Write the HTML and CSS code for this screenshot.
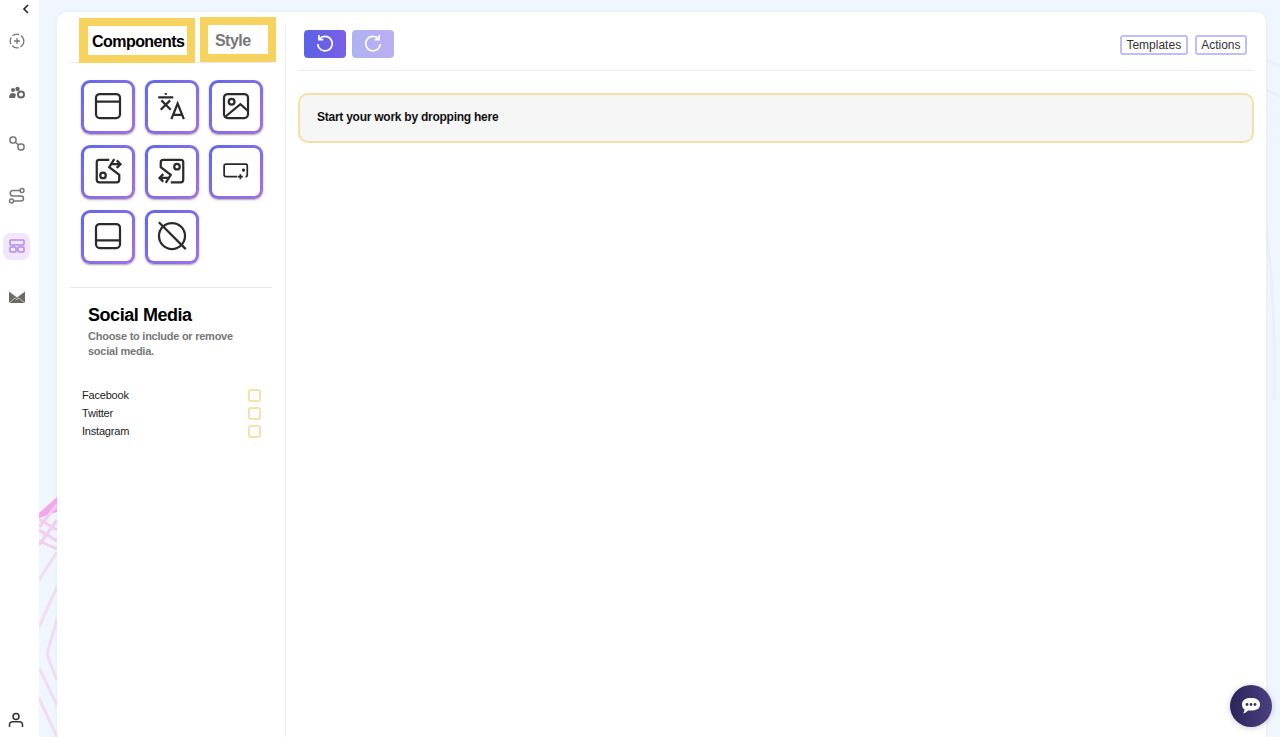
FILE: index.html
```html
<!DOCTYPE html>
<html lang="en">
<head>
    <meta charset="UTF-8">
    <meta name="viewport" content="width=device-width, initial-scale=1.0">
    <title>Template builder</title>
    <link rel="stylesheet" href="styles.css">
</head>
<body>

    <!-- background art behind the card -->
    <svg class="bg-art" width="1280" height="737" viewBox="0 0 1280 737" fill="none">
        <path d="M39 513 L57 497 L57 512 L39 518Z" fill="#f3a8ee"/>
        <g stroke="#f5cdf3" stroke-width="3">
            <path d="M39 527 L57 505"/>
            <path d="M39 545 L57 520"/>
            <path d="M39 519 L57 530"/>
            <path d="M39 530 L57 541"/>
            <path d="M39 541 L57 549"/>
        </g>
        <g stroke="#f2dcf5" stroke-width="3">
            <path d="M39 580 L57 552"/>
            <path d="M39 627 L57 587"/>
            <path d="M57 619 L49 647 Q46 654 49 660 L57 680"/>
            <path d="M39 668 L57 705"/>
            <path d="M39 698 L57 737"/>
        </g>
        <g stroke="#e8f1fb" stroke-width="3">
            <path d="M1266 60 L1280 66"/>
            <path d="M1266 90 L1280 96"/>
            <path d="M1266 230 Q1276 300 1274 400"/>
        </g>
    </svg>

    <aside class="sidebar">
        <button class="collapse">
            <svg width="10" height="10" viewBox="0 0 10 10" fill="none" stroke="#222" stroke-width="1.6"><path d="M7 1 L3 5 L7 9"/></svg>
        </button>
        <nav class="nav">
            <a class="nav-item">
                <svg width="18" height="18" viewBox="0 0 18 18" fill="none" stroke="#777" stroke-width="1.3"><circle cx="9" cy="9" r="6.8" stroke-dasharray="7 2"/><path d="M9 6 V12 M6 9 H12"/></svg>
            </a>
            <a class="nav-item">
                <svg width="18" height="18" viewBox="0 -1 18 18" fill="#666"><circle cx="5" cy="6" r="2"/><circle cx="9.5" cy="5" r="2.2"/><path d="M1 13 Q1.500 9 5 9 L8 10 L7 14 L1.500 14Z"/><circle cx="13" cy="10.500" r="3" fill="none" stroke="#666" stroke-width="2"/></svg>
            </a>
            <a class="nav-item">
                <svg width="18" height="18" viewBox="0 -1 18 18" fill="none" stroke="#777" stroke-width="1.500"><rect x="2" y="2" width="6" height="6" rx="2.500"/><rect x="10" y="9" width="6" height="6" rx="2.500"/><path d="M7 7 L10.500 10"/></svg>
            </a>
            <a class="nav-item">
                <svg width="18" height="18" viewBox="0 -1 18 18" fill="none" stroke="#777" stroke-width="1.500"><circle cx="14" cy="3.500" r="2"/><circle cx="3.500" cy="14" r="2"/><path d="M12 3.500 H5 A2.700 2.700 0 0 0 5 9 H13 A2.500 2.500 0 0 1 13 14 H5.500"/></svg>
            </a>
            <a class="nav-item active">
                <svg width="16" height="14" viewBox="0 0 16 14" fill="none" stroke="#b48de8" stroke-width="1.6"><rect x="1" y="1" width="14" height="5" rx="1"/><rect x="1" y="8" width="6" height="5" rx="1"/><rect x="9" y="8" width="6" height="5" rx="1"/></svg>
            </a>
            <a class="nav-item">
                <svg width="16" height="12" viewBox="0 -1.500 16 12" fill="#6e6963"><path d="M0 -1 L8 5 L16 -1 V10.500 H0Z"/><path d="M0 10.500 L6 5.500 L8 7 L10 5.500 L16 10.500" fill="none" stroke="#fff" stroke-width=".6"/></svg>
            </a>
        </nav>
        <a class="user">
            <svg width="16" height="16" viewBox="0 0 16 16" fill="none" stroke="#333" stroke-width="1.5"><circle cx="8" cy="4.500" r="3"/><path d="M1.500 15 V13 Q1.500 9.800 5 9.800 H11 Q14.500 9.800 14.500 13 V15"/></svg>
        </a>
    </aside>

    <main class="main">
        <div class="card">
            <section class="side">
                <div class="tabs">
                    <div class="tab tab-on">Components</div>
                    <div class="tab tab-off">Style</div>
                </div>

                <div class="blocks">
                    <button class="block">
                        <svg class="ico" viewBox="0 0 24 24"><rect x="2.400" y="2.400" width="19.200" height="19.200" rx="3"/><path d="M2.400 8.500 H21.600"/></svg>
                    </button>
                    <button class="block">
                        <svg class="ico" viewBox="0 0 24 24"><path d="M1 5 H13 M7 1.500 V3 M3.500 7.500 L11 15 M10.500 7.500 L3 15 M11.500 22.500 L16.500 10 L21.500 22.500 M13 19 H20"/></svg>
                    </button>
                    <button class="block">
                        <svg class="ico" viewBox="0 0 24 24"><rect x="2.400" y="2.400" width="19.200" height="19.200" rx="3"/><circle cx="8.500" cy="8.500" r="2.300"/><path d="M3 21 L15.500 10.500 L21.600 16"/></svg>
                    </button>
                    <button class="block">
                        <svg class="ico" viewBox="0 0 24 24"><path d="M13 3 H5 Q3 3 3 5 V19 Q3 21 5 21 H19 Q21 21 21 19 V15 L13 9 L17 2.500"/><circle cx="8" cy="15.500" r="2.200"/><path d="M14 6.500 H22 M19 3.500 L22 6.500 L19 9.500"/></svg>
                    </button>
                    <button class="block">
                        <svg class="ico flip" viewBox="0 0 24 24"><path d="M13 3 H5 Q3 3 3 5 V19 Q3 21 5 21 H19 Q21 21 21 19 V15 L13 9 L17 2.500"/><circle cx="8" cy="15.500" r="2.200"/><path d="M14 6.500 H22 M19 3.500 L22 6.500 L19 9.500"/></svg>
                    </button>
                    <button class="block">
                        <svg class="ico ico-thin" viewBox="0 0 24 24"><path d="M13 16.500 H4 Q2.500 16.500 2.500 15 V8 Q2.500 6.500 4 6.500 H20 Q21 6.500 21 8 V15 Q21 16.500 20 16.500 H19.500 M15.500 14.500 V18.500 M13.500 16.500 H17.500 M18 10 V12.500 M16.800 11.300 H19.200"/></svg>
                    </button>
                    <button class="block">
                        <svg class="ico" viewBox="0 0 24 24"><rect x="2.400" y="2.400" width="19.200" height="19.200" rx="3"/><path d="M2.400 15.500 H21.600"/></svg>
                    </button>
                    <button class="block">
                        <svg class="ico" viewBox="0 0 24 24"><circle cx="12" cy="12" r="10.400"/><path d="M1.500 1 L23 22.500"/></svg>
                    </button>
                </div>

                <div class="social">
                    <h2 class="social-title">Social Media</h2>
                    <p class="social-desc">Choose to include or remove social media.</p>
                    <ul class="social-list">
                        <li class="social-row">Facebook<span class="check"></span></li>
                        <li class="social-row">Twitter<span class="check"></span></li>
                        <li class="social-row">Instagram<span class="check"></span></li>
                    </ul>
                </div>
            </section>

            <div class="vline"></div>

            <section class="work">
                <div class="toolbar">
                    <button class="hist">
                        <svg width="20" height="20" viewBox="0 0 18 18" fill="none" stroke="#fff" stroke-width="1.500"><path d="M4 4.500 A6.500 6.500 0 1 1 2.500 9"/><path d="M3.500 1 V5 H7.500"/></svg>
                    </button>
                    <button class="hist hist-off">
                        <svg width="20" height="20" viewBox="0 0 18 18" fill="none" stroke="#fff" stroke-width="1.500"><path d="M14 4.500 A6.500 6.500 0 1 0 15.500 9"/><path d="M14.500 1 V5 H10.500"/></svg>
                    </button>
                    <div class="toolbar-right">
                        <button class="link-btn">Templates</button>
                        <button class="link-btn">Actions</button>
                    </div>
                </div>
                <div class="dropzone">Start your work by dropping here</div>
            </section>
        </div>
    </main>

    <button class="chat">
        <svg width="20" height="18" viewBox="0 0 20 18"><path d="M10 1 C15 1 19 2.800 19 7.500 C19 12 15 13.500 10 13.500 L7 13.500 C5.500 15 4 16 2 16.500 C3 15 3.500 14 3.500 12.500 C1.800 11.500 1 9.800 1 7.500 C1 2.800 5 1 10 1Z" fill="#fff"/><circle cx="6" cy="7.500" r="1.400" fill="#3a3268"/><circle cx="10" cy="7.500" r="1.400" fill="#3a3268"/><circle cx="14" cy="7.500" r="1.400" fill="#3a3268"/></svg>
    </button>

</body>
</html>
```

FILE: styles.css
```css
* {
    box-sizing: border-box;
}

html, body {
    height: 100%;
}

body {
    margin: 0;
    display: flex;
    overflow: hidden;
    font-family: "Liberation Sans", Arial, sans-serif;
    background-color: #eff6fd;
    color: #111;
}

button {
    font-family: inherit;
    padding: 0;
    cursor: pointer;
}

.bg-art {
    position: absolute;
    top: 0;
    left: 0;
}

/* left rail */
.sidebar {
    position: relative;
    width: 39px;
    flex-shrink: 0;
    display: flex;
    flex-direction: column;
    background-color: #fff;
    padding-top: 4px;
}

.collapse {
    align-self: flex-end;
    width: 10px;
    height: 10px;
    margin-right: 8px;
    border: none;
    background: none;
    display: flex;
}

.nav {
    display: flex;
    flex-direction: column;
    gap: 24.4px;
    margin-top: 13px;
    margin-left: 3px;
}

.nav-item {
    width: 27px;
    height: 27px;
    display: flex;
    align-items: center;
    justify-content: center;
    border-radius: 8px;
}

.nav-item.active {
    background-color: #f1e6fc;
}

.user {
    margin-top: auto;
    margin-left: 8px;
    margin-bottom: 9px;
    height: 16px;
}

/* card */
.main {
    position: relative;
    flex: 1;
    padding: 12px 14px 0 18px;
    display: flex;
}

.card {
    flex: 1;
    display: flex;
    background-color: #fff;
    border-radius: 10px 10px 0 0;
    box-shadow: 0 0 3px rgba(120, 140, 170, 0.15);
}

.side {
    width: 228px;
    flex-shrink: 0;
    padding-top: 5px;
}

.vline {
    width: 1px;
    margin-top: 13px;
    background-color: #eee;
}

/* tabs */
.tabs {
    height: 46px;
    margin: 0 13px;
    padding-left: 9px;
    display: flex;
    align-items: flex-start;
    gap: 5px;
    border-bottom: 1px solid #eaeaea;
}

.tab {
    flex-shrink: 0;
    height: 45px;
    border: 8px solid #f7d25f;
    background-color: #fff;
    font-size: 16px;
    font-weight: bold;
    letter-spacing: -0.55px;
    line-height: 31px;
}

.tab-on {
    width: 116px;
    margin-top: 1px;
    padding-left: 4px;
    color: #000;
    border-width: 8px 8px 8px 9px;
}

.tab-off {
    width: 76px;
    padding-left: 7px;
    color: #777;
}

/* component buttons */
.blocks {
    display: grid;
    grid-template-columns: repeat(3, 54px);
    gap: 11px 10px;
    margin-top: 17px;
    padding-left: 24px;
}

.block {
    height: 54px;
    padding: 0 1px 2px 0;
    display: flex;
    align-items: center;
    justify-content: center;
    border: 3px solid transparent;
    border-radius: 9px;
    background: linear-gradient(#fff, #fff) padding-box,
        linear-gradient(135deg, #6069ea, #a870e2) border-box;
    box-shadow: 0 1px 2px rgba(0, 0, 0, 0.35);
}

.ico {
    width: 30px;
    height: 30px;
    flex-shrink: 0;
    fill: none;
    stroke: #2b2b2b;
    stroke-width: 1.8;
}

.ico-thin {
    stroke-width: 1.4;
}

.flip {
    transform: rotate(180deg);
}

/* social media */
.social {
    margin: 23px 13px 0;
    border-top: 1px solid #eaeaea;
}

.social-title {
    margin: 16px 0 0 18px;
    font-size: 18px;
    line-height: 22px;
    letter-spacing: -0.45px;
    color: #000;
}

.social-desc {
    margin: 3px 20px 0 18px;
    font-size: 11px;
    font-weight: bold;
    letter-spacing: -0.25px;
    line-height: 15px;
    color: #777;
}

.social-list {
    list-style-type: none;
    margin: 27px 0 0;
    padding: 0 11px 0 12px;
}

.social-row {
    display: flex;
    align-items: center;
    justify-content: space-between;
    height: 18px;
    font-size: 11px;
    letter-spacing: -0.2px;
    color: #222;
}

.check {
    width: 13px;
    height: 13px;
    border: 2px solid #f8e0a8;
    border-radius: 3px;
    background-color: #fff;
}

/* work area */
.work {
    flex: 1;
    padding: 0 12px;
}

.toolbar {
    display: flex;
    align-items: flex-start;
    gap: 6px;
    height: 59px;
    padding: 18px 6px 0;
    border-bottom: 1px solid #efefef;
}

.hist {
    width: 42px;
    height: 28px;
    display: flex;
    align-items: center;
    justify-content: center;
    border: none;
    border-radius: 4px;
    background: linear-gradient(90deg, #5a62e6, #7a5fe6);
}

.hist-off {
    background: linear-gradient(90deg, #aeb2f2, #bcaef2);
}

.toolbar-right {
    margin-left: auto;
    margin-right: 1px;
    display: flex;
    gap: 7px;
    padding-top: 5px;
}

.link-btn {
    height: 20px;
    padding: 0 4.5px;
    border: 2px solid #bcbff9;
    border-radius: 3px;
    background-color: #fff;
    font-size: 12px;
    color: #333;
}

.dropzone {
    margin-top: 22px;
    height: 50px;
    padding: 0 0 2px 17px;
    display: flex;
    align-items: center;
    border: 2px solid #f6dfa6;
    border-radius: 10px;
    background-color: #f6f6f6;
    font-size: 12px;
    font-weight: bold;
    letter-spacing: -0.25px;
    color: #111;
}

/* chat bubble */
.chat {
    position: absolute;
    right: 8px;
    bottom: 10px;
    width: 42px;
    height: 42px;
    display: flex;
    align-items: center;
    justify-content: center;
    border: none;
    border-radius: 50%;
    background: linear-gradient(90deg, #2a2559, #4c4080);
    box-shadow: 0 1px 6px rgba(0, 0, 0, 0.2);
}
```
